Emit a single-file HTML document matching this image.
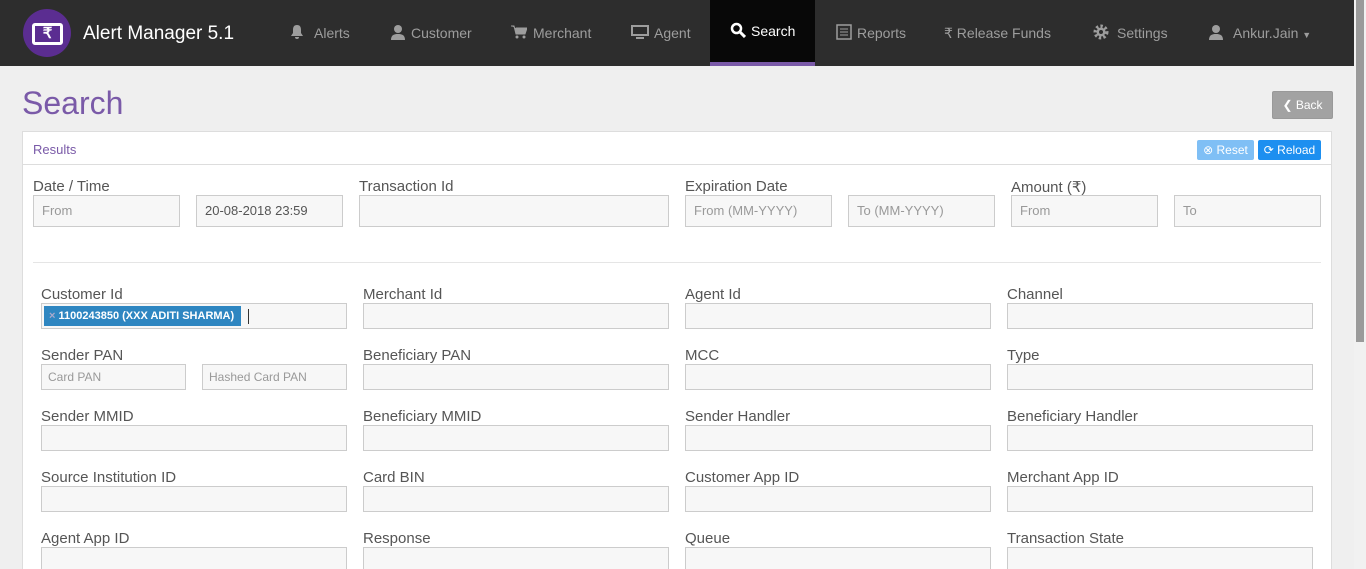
<!DOCTYPE html>
<html><head><meta charset="utf-8"><style>
*{box-sizing:border-box;margin:0;padding:0}
html,body{width:1366px;height:569px;overflow:hidden}
body{background:#efefef;font-family:"Liberation Sans",sans-serif;position:relative}
.a{position:absolute}
.nav{left:0;top:0;width:1354px;height:66px;background:#2d2d2d}
.ni{position:absolute;top:25px;color:#9d9d9d;font-size:14px;white-space:nowrap}
.ic{position:absolute;top:24px}
.lbl{position:absolute;font-size:15px;color:#555;margin-top:2px}
.in{position:absolute;border:1px solid #ccc;background:#f7f7f7;font-size:13px;color:#999;padding-left:8px}
.big{height:32px;line-height:30px}
.sm{height:26px;line-height:24px;font-size:12px;padding-left:6px}
</style></head><body>
<div class="a nav"></div>
<div class="a" style="left:1354px;top:0;width:12px;height:569px;background:#f1f1f1"></div>
<div class="a" style="left:1356px;top:0;width:8px;height:342px;background:#9a9a9a"></div>
<div class="a" style="left:23px;top:9px;width:48px;height:48px;border-radius:50%;background:#5b2d91"></div>
<div class="a" style="left:32px;top:23px;width:31px;height:22px;border:3px solid #fff;border-radius:3px;color:#fff;font-size:15px;font-weight:bold;text-align:center;line-height:16px">₹</div>
<div class="a" style="left:83px;top:23px;color:#fff;font-size:19px">Alert Manager 5.1</div>
<div class="a" style="left:710px;top:0;width:105px;height:66px;background:#080808;border-bottom:4px solid #7a5aa8"></div>
<svg class="ic" style="left:290px" width="14" height="16" viewBox="0 0 14 16"><path d="M7 1c-3 0-4 2-4 5v3l-2 3h12l-2-3V6c0-3-1-5-4-5zM5 13a2 2 0 004 0z" fill="#9d9d9d"/></svg>
<div class="ni" style="left:314px">Alerts</div>
<svg class="ic" style="left:390px" width="16" height="16" viewBox="0 0 16 16"><circle cx="8" cy="5" r="4" fill="#9d9d9d"/><path d="M1 16c0-5 3-6 7-6s7 1 7 6z" fill="#9d9d9d"/></svg>
<div class="ni" style="left:411px">Customer</div>
<svg class="ic" style="left:511px" width="16" height="16" viewBox="0 0 16 16"><path d="M0 2h3l2 8h9l2-6H5" fill="#9d9d9d" stroke="#9d9d9d"/><circle cx="6" cy="13" r="1.5" fill="#9d9d9d"/><circle cx="13" cy="13" r="1.5" fill="#9d9d9d"/></svg>
<div class="ni" style="left:533px">Merchant</div>
<svg class="ic" style="left:631px" width="18" height="16" viewBox="0 0 18 16"><rect x="0" y="1" width="18" height="11" fill="#9d9d9d"/><rect x="2" y="3" width="14" height="7" fill="#2d2d2d"/><rect x="5" y="13" width="8" height="2" fill="#9d9d9d"/></svg>
<div class="ni" style="left:654px">Agent</div>
<svg class="ic" style="left:730px;top:22px" width="16" height="16" viewBox="0 0 16 16"><circle cx="6.5" cy="6.5" r="4.5" fill="none" stroke="#fff" stroke-width="2.5"/><path d="M10 10l5 5" stroke="#fff" stroke-width="3"/></svg>
<div class="ni" style="left:751px;top:23px;color:#fff">Search</div>
<svg class="ic" style="left:836px" width="16" height="16" viewBox="0 0 16 16"><rect x="1" y="1" width="14" height="14" fill="none" stroke="#9d9d9d" stroke-width="1.5"/><path d="M4 5h8M4 8h8M4 11h8" stroke="#9d9d9d"/></svg>
<div class="ni" style="left:857px">Reports</div>
<div class="ni" style="left:944px">₹ Release Funds</div>
<svg class="ic" style="left:1093px" width="16" height="16" viewBox="0 0 16 16"><circle cx="8" cy="8" r="5.5" fill="none" stroke="#9d9d9d" stroke-width="4" stroke-dasharray="2.2 2"/><circle cx="8" cy="8" r="4.5" fill="#9d9d9d"/><circle cx="8" cy="8" r="2" fill="#2d2d2d"/></svg>
<div class="ni" style="left:1117px">Settings</div>
<svg class="ic" style="left:1208px" width="16" height="16" viewBox="0 0 16 16"><circle cx="8" cy="5" r="4" fill="#9d9d9d"/><path d="M1 16c0-5 3-6 7-6s7 1 7 6z" fill="#9d9d9d"/></svg>
<div class="ni" style="left:1233px">Ankur.Jain <span style="font-size:9px">▼</span></div>

<div class="a" style="left:22px;top:85px;font-size:32px;color:#7a5aa8">Search</div>
<div class="a" style="left:1272px;top:91px;width:61px;height:28px;background:#a2a2a2;border:1px solid #999;border-radius:2px;color:#fff;font-size:12px;line-height:26px;text-align:center">❮ Back</div>

<div class="a" style="left:22px;top:131px;width:1310px;height:438px;background:#fff;border:1px solid #ddd;border-bottom:none"></div>
<div class="a" style="left:23px;top:164px;width:1308px;height:1px;background:#ddd"></div>
<div class="a" style="left:33px;top:142px;font-size:13px;color:#7a5aa8">Results</div>
<div class="a" style="left:1197px;top:140px;width:57px;height:20px;background:#7fbff5;border-radius:2px;color:#fff;font-size:12px;line-height:20px;text-align:center">⊗ Reset</div>
<div class="a" style="left:1258px;top:140px;width:63px;height:20px;background:#1d8ff0;border-radius:2px;color:#fff;font-size:12px;line-height:20px;text-align:center">⟳ Reload</div>

<div class="lbl" style="left:33px;top:176px">Date / Time</div>
<div class="lbl" style="left:359px;top:176px">Transaction Id</div>
<div class="lbl" style="left:685px;top:176px">Expiration Date</div>
<div class="lbl" style="left:1011px;top:176px">Amount (₹)</div>
<div class="in big" style="left:33px;top:195px;width:147px">From</div>
<div class="in big" style="left:196px;top:195px;width:147px;color:#555">20-08-2018 23:59</div>
<div class="in big" style="left:359px;top:195px;width:310px"></div>
<div class="in big" style="left:685px;top:195px;width:147px">From (MM-YYYY)</div>
<div class="in big" style="left:848px;top:195px;width:147px">To (MM-YYYY)</div>
<div class="in big" style="left:1011px;top:195px;width:147px">From</div>
<div class="in big" style="left:1174px;top:195px;width:147px">To</div>
<div class="a" style="left:33px;top:262px;width:1288px;height:1px;background:#e5e5e5"></div>

<div class="lbl" style="left:41px;top:284px">Customer Id</div><div class="lbl" style="left:363px;top:284px">Merchant Id</div><div class="lbl" style="left:685px;top:284px">Agent Id</div><div class="lbl" style="left:1007px;top:284px">Channel</div>
<div class="in sm" style="left:41px;top:303px;width:306px"></div>
<div class="a" style="left:44px;top:306px;width:197px;height:20px;background:#2e86c1;color:#fff;font-size:11px;font-weight:bold;line-height:20px;padding-left:5px"><span style="color:#aac">×</span> 1100243850 (XXX ADITI SHARMA)</div>
<div class="a" style="left:248px;top:309px;width:1px;height:15px;background:#333"></div>
<div class="in sm" style="left:363px;top:303px;width:306px"></div><div class="in sm" style="left:685px;top:303px;width:306px"></div><div class="in sm" style="left:1007px;top:303px;width:306px"></div>

<div class="lbl" style="left:41px;top:345px">Sender PAN</div><div class="lbl" style="left:363px;top:345px">Beneficiary PAN</div><div class="lbl" style="left:685px;top:345px">MCC</div><div class="lbl" style="left:1007px;top:345px">Type</div>
<div class="in sm" style="left:41px;top:364px;width:145px">Card PAN</div><div class="in sm" style="left:202px;top:364px;width:145px">Hashed Card PAN</div>
<div class="in sm" style="left:363px;top:364px;width:306px"></div><div class="in sm" style="left:685px;top:364px;width:306px"></div><div class="in sm" style="left:1007px;top:364px;width:306px"></div>

<div class="lbl" style="left:41px;top:406px">Sender MMID</div><div class="lbl" style="left:363px;top:406px">Beneficiary MMID</div><div class="lbl" style="left:685px;top:406px">Sender Handler</div><div class="lbl" style="left:1007px;top:406px">Beneficiary Handler</div>
<div class="in sm" style="left:41px;top:425px;width:306px"></div><div class="in sm" style="left:363px;top:425px;width:306px"></div><div class="in sm" style="left:685px;top:425px;width:306px"></div><div class="in sm" style="left:1007px;top:425px;width:306px"></div>

<div class="lbl" style="left:41px;top:467px">Source Institution ID</div><div class="lbl" style="left:363px;top:467px">Card BIN</div><div class="lbl" style="left:685px;top:467px">Customer App ID</div><div class="lbl" style="left:1007px;top:467px">Merchant App ID</div>
<div class="in sm" style="left:41px;top:486px;width:306px"></div><div class="in sm" style="left:363px;top:486px;width:306px"></div><div class="in sm" style="left:685px;top:486px;width:306px"></div><div class="in sm" style="left:1007px;top:486px;width:306px"></div>

<div class="lbl" style="left:41px;top:528px">Agent App ID</div><div class="lbl" style="left:363px;top:528px">Response</div><div class="lbl" style="left:685px;top:528px">Queue</div><div class="lbl" style="left:1007px;top:528px">Transaction State</div>
<div class="in sm" style="left:41px;top:547px;width:306px"></div><div class="in sm" style="left:363px;top:547px;width:306px"></div><div class="in sm" style="left:685px;top:547px;width:306px"></div><div class="in sm" style="left:1007px;top:547px;width:306px"></div>
</body></html>
